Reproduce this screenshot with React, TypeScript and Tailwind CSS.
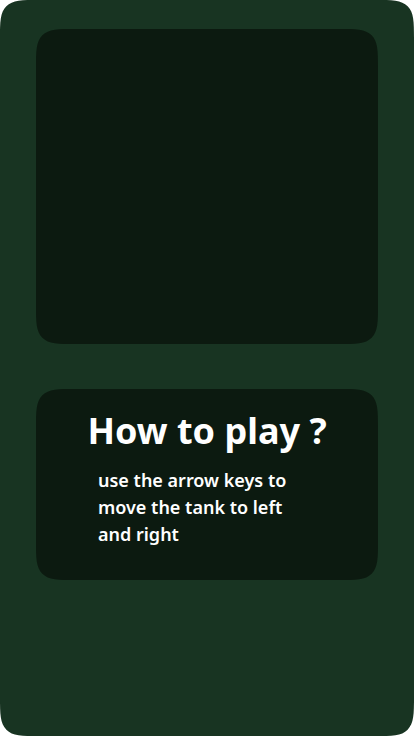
export default function App() {
  return (
    <div className="min-h-screen bg-white font-['Noto_Sans',sans-serif] text-white">
      <main className="flex min-h-screen flex-col gap-[45px] rounded-[40px] bg-[#183422] px-9 pt-[29px] pb-9 [corner-shape:squircle]">
        <section
          aria-label="Game"
          className="h-[315px] rounded-[40px] bg-[#0c1a10] [corner-shape:squircle]"
        />
        <section className="flex flex-col items-center rounded-[40px] bg-[#0c1a10] pt-5 pb-8 [corner-shape:squircle]">
          <h1 className="text-4xl leading-[44px] font-bold">How to play ?</h1>
          <p className="mt-[14px] w-[218px] text-lg leading-[27px] font-semibold">
            use the arrow keys to move the tank to left and right
          </p>
        </section>
      </main>
    </div>
  );
}
